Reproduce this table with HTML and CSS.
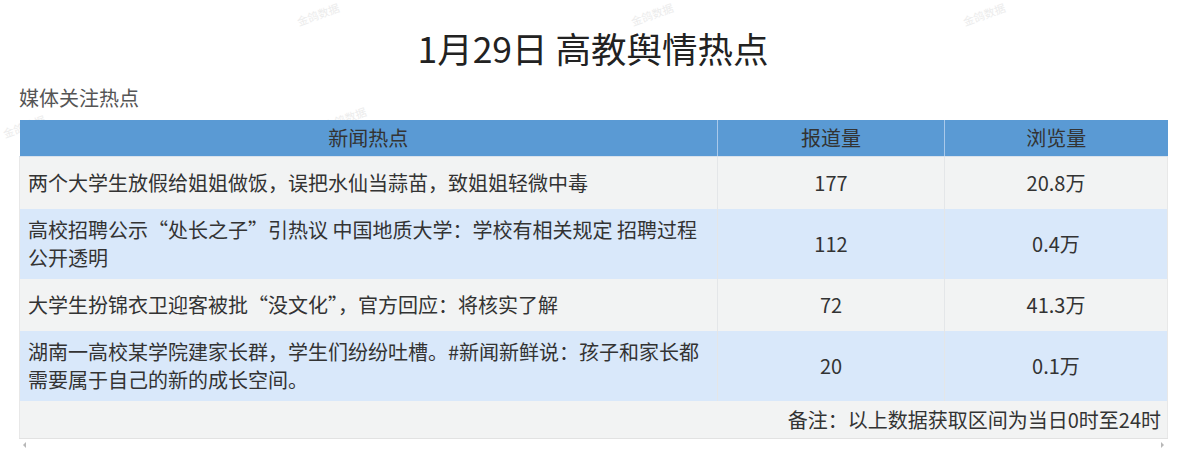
FILE: index.html
```html
<!DOCTYPE html>
<html lang="zh-CN">
<head>
<meta charset="utf-8">
<title>1月29日 高教舆情热点</title>
<link rel="stylesheet" href="styles.css">
</head>
<body>
<div class="marks" aria-hidden="true">
  <span class="mark m1">金鸽数据</span>
  <span class="mark m2">金鸽数据</span>
  <span class="mark m3">金鸽数据</span>
  <span class="mark m4">金鸽数据</span>
  <span class="mark m5">金鸽数据</span>
</div>
<main class="page">
  <h1 class="title">1月29日 高教舆情热点</h1>
  <h2 class="subtitle">媒体关注热点</h2>
  <div class="scroller">
    <table class="hot">
      <colgroup>
        <col class="c-news">
        <col class="c-num">
        <col class="c-view">
      </colgroup>
      <thead>
        <tr><th>新闻热点</th><th>报道量</th><th>浏览量</th></tr>
      </thead>
      <tbody>
        <tr class="odd"><td class="news">两个大学生放假给姐姐做饭，误把水仙当蒜苗，致姐姐轻微中毒</td><td>177</td><td>20.8万</td></tr>
        <tr class="even"><td class="news">高校招聘公示“处长之子”引热议 中国地质大学：学校有相关规定 招聘过程公开透明</td><td>112</td><td>0.4万</td></tr>
        <tr class="odd"><td class="news">大学生扮锦衣卫迎客被批“没文化”，官方回应：将核实了解</td><td>72</td><td>41.3万</td></tr>
        <tr class="even"><td class="news">湖南一高校某学院建家长群，学生们纷纷吐槽。#新闻新鲜说：孩子和家长都需要属于自己的新的成长空间。</td><td>20</td><td>0.1万</td></tr>
        <tr class="foot"><td colspan="3">备注：以上数据获取区间为当日0时至24时</td></tr>
      </tbody>
    </table>
    <div class="hbar"><span class="arr left"></span><span class="arr right"></span></div>
  </div>
</main>
</body>
</html>
```

FILE: styles.css
```css
html, body {
  margin: 0;
  padding: 0;
  background: #fff;
}
body {
  font-family: "Noto Sans CJK SC", "Noto Sans", sans-serif;
  color: #333;
  position: relative;
  height: 467px;
  overflow: hidden;
}
.page {
  margin-left: 19px;
  width: 1148px;
  position: relative;
}
.title {
  margin: 0;
  padding-top: 26px;
  font-size: 35.5px;
  line-height: 44px;
  font-weight: 400;
  text-align: center;
  color: #222;
}
.subtitle {
  margin: 15px 0 9px;
  font-size: 20px;
  line-height: 26px;
  font-weight: 400;
  color: #555;
}
.hot {
  width: 1148px;
  border-collapse: collapse;
  table-layout: fixed;
  font-size: 20px;
  color: #333;
}
.c-news { width: 698px; }
.c-num { width: 227px; }
.c-view { width: 223px; }
.hot th {
  background: #5a9ad4;
  height: 36px;
  padding: 0;
  font-weight: 400;
  line-height: 26px;
  color: #333;
  border-left: 1px solid #a9c9ea;
  border-bottom: 1px solid #d9e2ec;
}
.hot th:first-child { border-left: none; }
.hot td {
  height: 38px;
  padding: 7px 8px;
  line-height: 28px;
  text-align: center;
  border-left: 1px solid #e4e6e8;
}
.hot td:first-child { border-left: 1px solid #e8e8e8; }
.hot tr td:last-child { border-right: 1px solid #e8e8e8; }
.hot td.news { text-align: left; }
.odd td { background: #f2f3f3; }
.even td { background: #d9e8fa; }
.foot td {
  background: #f2f3f3;
  height: 26px;
  padding: 6px 6px 5px;
  line-height: 26px;
  text-align: right;
  border-bottom: 1px solid #e2e2e2;
}
.hbar {
  height: 12px;
  display: flex;
  justify-content: space-between;
  align-items: center;
  padding: 0 3px 0 4px;
}
.arr {
  width: 0;
  height: 0;
  border-top: 3px solid transparent;
  border-bottom: 3px solid transparent;
}
.arr.left { border-right: 3px solid #b8b8b8; }
.arr.right { border-left: 3px solid #b8b8b8; }
.marks {
  position: absolute;
  inset: 0;
  pointer-events: none;
}
.mark {
  position: absolute;
  font-size: 11px;
  color: #ececec;
  transform: rotate(-20deg);
  white-space: nowrap;
}
.m1 { left: 296px; top: 6px; }
.m2 { left: 630px; top: 6px; }
.m3 { left: 962px; top: 6px; }
.m4 { left: 323px; top: 110px; }
.m5 { left: 2px; top: 118px; }
```
